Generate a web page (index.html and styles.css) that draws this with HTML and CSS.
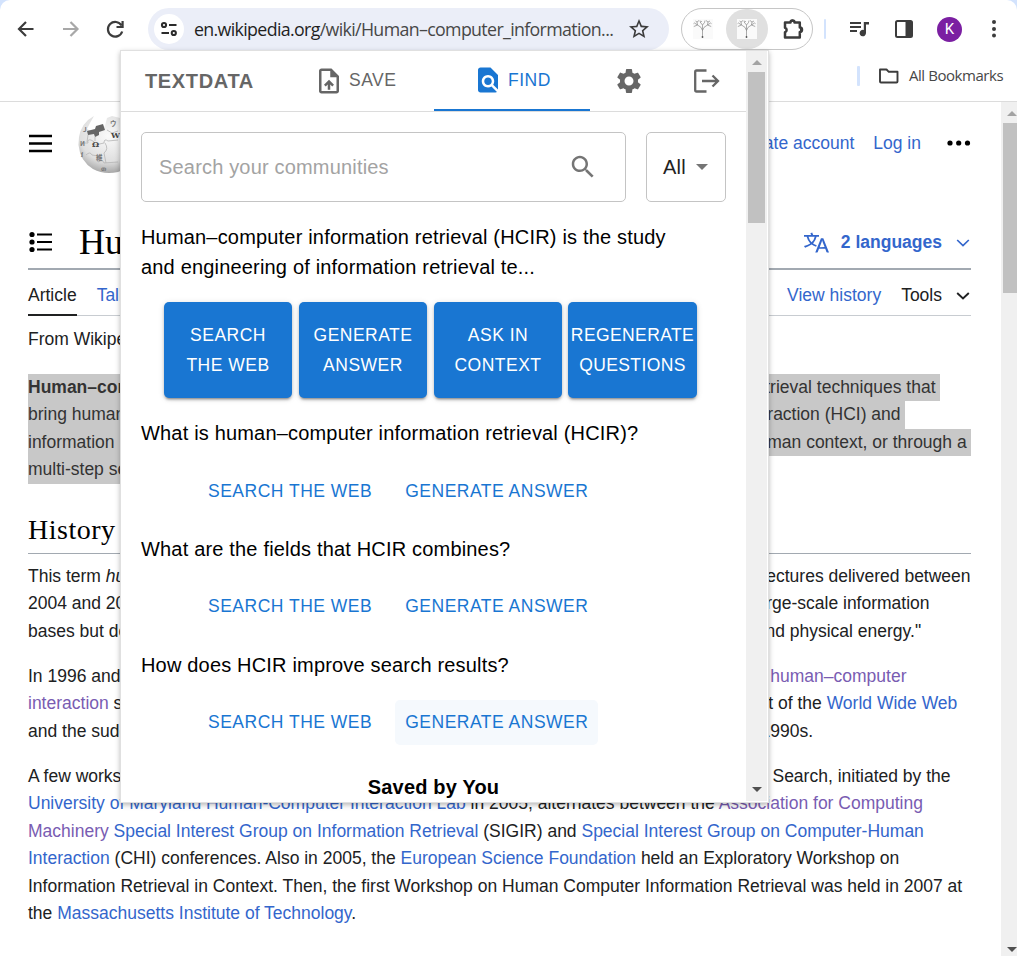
FILE: index.html
```html
<!DOCTYPE html>
<html lang="en">
<head>
<meta charset="utf-8">
<title>Human–computer information retrieval</title>
<link rel="stylesheet" href="styles.css">
</head>
<body>
<div class="window">
  <header class="chrome">
    <div class="toolbar">
      <svg class="nav-icon" viewBox="0 0 44 44"><path d="M29.500 22H15.500M22 15L15 22L22 29" fill="none" stroke="#3c3c3c" stroke-width="2.200"/></svg>
      <svg class="nav-icon" viewBox="0 0 44 44"><path d="M15 22H29M22.500 15L29.500 22L22.500 29" fill="none" stroke="#a8a8a8" stroke-width="2.200"/></svg>
      <svg class="nav-icon reload" viewBox="0 0 44 44"><path d="M28.500 18.500A7.300 7.300 0 1 0 29.200 24.500M29.600 14V20H23.500" fill="none" stroke="#3c3c3c" stroke-width="2.200"/></svg>
      <div class="omnibox">
        <span class="site-info"><svg viewBox="0 0 18 18" width="18" height="18"><g fill="none" stroke="#2b2b2b" stroke-width="2"><circle cx="4" cy="5" r="2.100"/><path d="M9 5H16.500M1.500 13H9"/><circle cx="13.800" cy="13" r="2.100"/></g></svg></span>
        <span class="url"><b>en.wikipedia.org</b>/wiki/Human–computer_information...</span>
        <svg class="star" viewBox="0 0 24 24"><path fill="#3c3c3c" d="M22 9.240l-7.190-.62L12 2 9.190 8.630 2 9.240l5.460 4.730L5.820 21 12 17.270 18.180 21l-1.630-7.030L22 9.240zM12 15.400l-3.760 2.270 1-4.280-3.320-2.880 4.380-.38L12 6.100l1.710 4.040 4.380.38-3.320 2.880 1 4.280L12 15.400z"/></svg>
      </div>
      <div class="extensions">
        <span class="ext"><svg class="tree" viewBox="0 0 20 20"><use href="#tree"/></svg></span>
        <span class="ext ext-active"><svg class="tree" viewBox="0 0 20 20"><use href="#tree"/></svg></span>
        <span class="ext ext-menu"><svg viewBox="0 0 24 24" width="24" height="24"><path d="M4 5.500H9.500A2 2 0 0 1 13.500 5.500H18.800V10.500A2.200 2.200 0 0 1 18.800 14.900V20.500H4V15.200A2.300 2.300 0 0 0 4 10.800Z" fill="none" stroke="#3c3c3c" stroke-width="2.500" stroke-linejoin="round"/><path d="M9 5a2.400 2.400 0 0 1 5 0zM19 10.200a2.500 2.500 0 0 1 0 5z" fill="#3c3c3c"/></svg></span>
      </div>
      <span class="divider"></span>
      <svg class="media" viewBox="0 0 22 20"><path d="M1 4H12M1 8H12M1 12H8" stroke="#3c3c3c" stroke-width="2"/><path d="M14.800 3H20V5.400H17V14A3.200 3.200 0 1 1 14.800 11Z" fill="#3c3c3c"/></svg>
      <svg class="panel-icon" viewBox="0 0 20 20"><rect x="2" y="2" width="16" height="16" rx="1.500" fill="none" stroke="#3c3c3c" stroke-width="2"/><path d="M11.500 2H18V18H11.500Z" fill="#3c3c3c"/></svg>
      <span class="avatar">K</span>
      <svg class="dots-v" viewBox="0 0 6 20"><g fill="#3c3c3c"><circle cx="3" cy="3" r="2"/><circle cx="3" cy="10" r="2"/><circle cx="3" cy="16.500" r="2"/></g></svg>
    </div>
    <div class="bookmarks">
      <span class="divider"></span>
      <svg class="folder" viewBox="0 0 22 18"><path d="M2 14.500V2.500H8.500L10.800 4.800H19.500V14.500Q19.500 15.500 18.500 15.500H3Q2 15.500 2 14.500Z" fill="none" stroke="#3c3c3c" stroke-width="1.900" stroke-linejoin="round"/></svg>
      <span class="bm-label">All Bookmarks</span>
    </div>
  </header>

  <div class="viewport">
    <main class="wiki">
      <div class="wiki-head">
        <svg class="burger" viewBox="0 0 24 20"><path d="M0 2H23M0 9.500H23M0 17H23" stroke="#000" stroke-width="2.400"/></svg>
        <svg class="globe" viewBox="0 0 64 60">
          <defs><radialGradient id="ball" cx="0.480" cy="0.350" r="0.750"><stop offset="0" stop-color="#fafafa"/><stop offset="0.600" stop-color="#dfdfdf"/><stop offset="1" stop-color="#8c8c8c"/></radialGradient></defs>
          <path d="M16 1L12 8L9 14L15 17L22 15L27 11L29 3L34 1L42 3Q62 10 62 30Q60 50 40 57Q26 60 15 54Q2 46 .5 30Q0 14 10 5Z" fill="url(#ball)"/>
          <path d="M9 16L17 14L18 11L25 9L27 15L21 17V20L17 22L16 19L10 20Z" fill="#666"/>
          <path d="M4 28H10Q9 24 13 25T17 30L26 28Q26 23 30 26L40 25M8 40Q12 36 14 40L20 41V47Q25 44 26 48L40 47M27 28Q31 34 26 38L28 48M10 20L9 27M29 15L34 18L40 16M17 22V26" fill="none" stroke="#b5b5b5" stroke-width=".8"/>
          <g class="globe-marks"><text x="14" y="32">Ω</text><text x="33" y="23">W</text><text x="18" y="45" class="mark-s">維</text><text x="2" y="31" class="mark-s">И</text><text x="3" y="42" class="mark-s">វ</text><text x="5" y="17" class="mark-s">J</text><text x="23" y="56" class="mark-s">თ</text><text x="32" y="11" class="mark-s">ウ</text></g>
        </svg>
        <nav class="account"><a>Create account</a><a>Log in</a></nav>
        <svg class="dots-h" viewBox="0 0 24 6"><circle cx="3" cy="3" r="2.600"/><circle cx="11.700" cy="3" r="2.600"/><circle cx="20.500" cy="3" r="2.600"/></svg>
      </div>
      <div class="title-row">
        <svg class="toc" viewBox="0 0 24 22"><g stroke="#000" stroke-width="2.200"><path d="M8 3.500H23M8 11H23M8 18.500H23"/></g><circle cx="3" cy="3.500" r="2.600"/><circle cx="3" cy="11" r="2.600"/><circle cx="3" cy="18.500" r="2.600"/></svg>
        <h1>Human–computer</h1>
        <div class="langs"><svg viewBox="0 0 20 20" width="25" height="25"><path fill="#36c" d="M20 18h-1.440a.6.6 0 01-.4-.12.8.8 0 01-.23-.31L17 15h-5l-1 2.540a.8.8 0 01-.22.3.6.6 0 01-.4.140H9l4.550-11.470h1.890zm-3.530-4.310L14.890 9.500a11.600 11.600 0 01-.39-1.240q-.09.370-.19.690l-.19.560-1.580 4.190zm-6.300-1.580a13.400 13.400 0 01-2.910-1.410 11.460 11.460 0 002.810-5.370H12V4H7.310a4 4 0 00-.2-.56C6.870 2.790 6.600 2 6.600 2l-1.470.5s.4.890.6 1.500H0v1.330h2.150A11.230 11.230 0 005 10.700a17.200 17.200 0 01-5 2.100q.56.820.87 1.380a23.300 23.300 0 005.220-2.510 15.600 15.600 0 003.560 1.770zM3.630 5.330h4.910a8.100 8.100 0 01-2.450 4.450 9.100 9.100 0 01-2.460-4.450"/></svg><b>2 languages</b><svg class="chev" viewBox="0 0 14 8"><path d="M1.200 1L7 6.500L12.800 1" fill="none" stroke="#36c" stroke-width="1.700"/></svg></div>
      </div>
      <div class="tabs-row">
        <a class="tab tab-on">Article</a><a class="tab">Talk</a>
        <a class="tab push">View history</a><a class="tab tools">Tools <svg class="chev" viewBox="0 0 14 8"><path d="M1.200 1L7 6.500L12.800 1" fill="none" stroke="#202122" stroke-width="1.900"/></svg></a>
      </div>
      <p class="sub">From Wikipedia, the free encyclopedia</p>
      <p class="lead"><span class="sel"><b>Human–computer information retrieval</b> (<b>HCIR</b>) is the study and engineering of information retrieval techniques that </span><span class="sel">bring human intelligence into the <a>search</a> process. It combines the fields of human-computer interaction (HCI) and </span><span class="sel">information retrieval (IR) and creates systems that improve search by taking into account the human context, or through a </span><span class="sel">multi-step search process that provides the opportunity for human feedback.</span></p>
      <h2>History</h2>
      <p>
        <span class="ln">This term <i>human–computer information retrieval</i> was coined by <a>Gary Marchionini</a> in a series of lectures delivered between</span>
        <span class="ln">2004 and 2006.<sup>[1]</sup> Marchionini's main thesis is that "HCIR aims to empower people to explore large-scale information</span>
        <span class="ln">bases but demands that people also take responsibility for this control by expending cognitive and physical energy."</span>
      </p>
      <p>
        <span class="ln">In 1996 and 1998, a pair of workshops at the <a>University of Glasgow</a> on <a>information retrieval</a> and <a class="seen">human–computer</a></span>
        <span class="ln"><a class="seen">interaction</a> sought to address the overlap between these two fields. Marchionini notes the impact of the <a>World Wide Web</a></span>
        <span class="ln">and the sudden increase in information literacy – changes that were only embryonic in the late 1990s.</span>
      </p>
      <p>
        <span class="ln">A few workshops have focused on the intersection of IR and HCI. The Workshop on Exploratory Search, initiated by the</span>
        <span class="ln"><a>University of Maryland Human-Computer Interaction Lab</a> in 2005, alternates between the <a class="seen">Association for Computing</a></span>
        <span class="ln"><a class="seen">Machinery</a> <a>Special Interest Group on Information Retrieval</a> (SIGIR) and <a>Special Interest Group on Computer-Human</a></span>
        <span class="ln"><a>Interaction</a> (CHI) conferences. Also in 2005, the <a>European Science Foundation</a> held an Exploratory Workshop on</span>
        <span class="ln">Information Retrieval in Context. Then, the first Workshop on Human Computer Information Retrieval was held in 2007 at</span>
        <span class="ln">the <a>Massachusetts Institute of Technology</a>.</span>
      </p>
    </main>
    <div class="scrollbar page-scroll"><i class="arrow up"></i><i class="thumb"></i><i class="arrow down"></i></div>
  </div>

  <section class="popup">
    <div class="pop-main">
      <nav class="pop-tabs">
        <strong class="brand">TEXTDATA</strong>
        <span class="pop-tab save"><svg viewBox="0 0 24 24" width="30" height="30"><path fill="#666" d="M14 2H6c-1.100 0-1.990.9-1.990 2L4 20c0 1.100.89 2 1.990 2H18c1.100 0 2-.9 2-2V8l-6-6zm4 18H6V4h7v5h5v11zM8 15.010l1.410 1.410L11 14.840V19h2v-4.160l1.590 1.590L16 15.010 12.010 11 8 15.010z"/></svg>SAVE</span>
        <span class="pop-tab find"><svg viewBox="0 0 24 24" width="30" height="30"><path fill="#1976d2" d="M20 19.590V8l-6-6H6c-1.100 0-1.990.9-1.990 2L4 20c0 1.100.89 2 1.990 2H18c.45 0 .85-.15 1.190-.4l-4.430-4.430c-.8.520-1.740.830-2.760.830-2.760 0-5-2.240-5-5s2.240-5 5-5 5 2.240 5 5c0 1.020-.31 1.960-.83 2.750L20 19.590zM9 13c0 1.660 1.340 3 3 3s3-1.340 3-3-1.340-3-3-3-3 1.340-3 3z"/></svg>FIND</span>
        <svg class="gear" viewBox="0 0 24 24"><path fill="#666" d="M19.140 12.940c.04-.3.060-.61.060-.94 0-.32-.02-.64-.07-.94l2.030-1.580c.18-.14.230-.41.120-.61l-1.920-3.320c-.12-.22-.37-.29-.59-.22l-2.390.96c-.5-.38-1.030-.7-1.620-.94l-.36-2.540c-.04-.24-.24-.41-.48-.41h-3.840c-.24 0-.43.170-.47.410l-.36 2.540c-.59.240-1.130.570-1.620.940l-2.390-.96c-.22-.08-.47 0-.59.220L2.740 8.870c-.12.210-.08.470.120.610l2.030 1.580c-.05.300-.09.630-.09.940s.02.640.070.940l-2.030 1.580c-.18.140-.23.410-.12.610l1.920 3.320c.12.220.37.290.59.220l2.390-.96c.5.380 1.030.700 1.620.940l.36 2.540c.05.240.24.410.48.410h3.840c.24 0 .44-.17.470-.41l.36-2.540c.59-.24 1.130-.56 1.620-.94l2.390.96c.22.080.47 0 .59-.22l1.920-3.320c.12-.22.070-.47-.12-.61l-2.010-1.580zM12 15.600c-1.980 0-3.600-1.620-3.600-3.600s1.620-3.600 3.600-3.600 3.600 1.620 3.600 3.600-1.620 3.600-3.600 3.600z"/></svg>
        <svg class="logout" viewBox="0 0 28 26"><path d="M13.500 2.500H3.500Q2.200 2.500 2.200 4V22Q2.200 23.500 3.500 23.500H13.500M9 13H25M19.500 7.500L25 13L19.500 18.500" fill="none" stroke="#666" stroke-width="2.300"/></svg>
      </nav>
      <div class="pop-body">
        <div class="search-row">
          <div class="field"><span>Search your communities</span><svg viewBox="0 0 24 24" width="30" height="30"><path fill="#757575" d="M15.500 14h-.79l-.28-.27C15.410 12.590 16 11.110 16 9.500 16 5.910 13.090 3 9.500 3S3 5.910 3 9.500 5.910 16 9.500 16c1.610 0 3.090-.59 4.230-1.570l.27.280v.790l5 4.990L20.490 19l-4.990-5zm-6 0C7.010 14 5 11.990 5 9.500S7.010 5 9.500 5 14 7.010 14 9.500 11.990 14 9.500 14z"/></svg></div>
          <div class="select">All<i class="caret"></i></div>
        </div>
        <p class="excerpt">Human–computer information retrieval (HCIR) is the study<br>and engineering of information retrieval te...</p>
        <div class="actions">
          <button>SEARCH<br>THE WEB</button><button>GENERATE<br>ANSWER</button><button>ASK IN<br>CONTEXT</button><button class="wide">REGENERATE<br>QUESTIONS</button>
        </div>
        <p class="question">What is human–computer information retrieval (HCIR)?</p>
        <div class="links"><span>SEARCH THE WEB</span><span>GENERATE ANSWER</span></div>
        <p class="question">What are the fields that HCIR combines?</p>
        <div class="links"><span>SEARCH THE WEB</span><span>GENERATE ANSWER</span></div>
        <p class="question">How does HCIR improve search results?</p>
        <div class="links"><span>SEARCH THE WEB</span><span class="hover">GENERATE ANSWER</span></div>
        <p class="saved">Saved by You</p>
      </div>
    </div>
    <div class="scrollbar pop-scroll"><i class="arrow up"></i><i class="thumb"></i><i class="arrow down"></i></div>
  </section>
</div>
<svg class="defs" width="0" height="0"><symbol id="tree" viewBox="0 0 20 20"><rect width="20" height="20" fill="#fafafa"/><path d="M9.500 18V10M9.500 11.500Q9 8 4.500 6M9.500 11.500Q10 8 14.500 6M9.500 10V6L7.500 3.500M9.500 6L11.500 3.500M4.500 6L.8 7.500M4.500 6L4 3M4.500 6L1.500 4M14.500 6L18.200 7.500M14.500 6L15 3M14.500 6L17.500 4M4 3L2.500 2M4 3L6 1.500M15 3L13 1.500M15 3L17 2M7.500 3.500L7 1.500M11.500 3.500L12 1.500M1.500 4L.6 4.600M17.500 4L18.500 4.600M7.500 3.500L8.800 2" fill="none" stroke="#888" stroke-width=".7"/><circle cx="9.500" cy="18" r=".9" fill="#555"/></symbol></svg>
</body>
</html>
```

FILE: styles.css
```css
* { box-sizing: border-box; }
body { margin: 0; background: #fff; font-family: "Liberation Sans", Arial, sans-serif; }
p, h1, h2 { margin: 0; }
svg { flex: none; display: block; }
.defs { position: absolute; }
.window { position: relative; width: 1017px; height: 956px; overflow: hidden; display: flex; flex-direction: column; }

/* browser chrome */
.chrome { height: 102px; flex: none; border-bottom: 1px solid #dcdcdc; border-radius: 10px 10px 0 0; background: #fff; box-shadow: 0 -10px 0 10px #d3e3fd; }
.toolbar { height: 50px; padding: 8px 0 0 4px; display: flex; align-items: center; }
.nav-icon { width: 44px; height: 44px; }
.reload { margin-left: 1px; }
.omnibox { width: 521px; height: 42px; margin-left: 11px; padding: 0 18px 0 6px; border-radius: 21px; background: #ebeef8; display: flex; align-items: center; flex: none; }
.site-info { width: 30px; height: 30px; flex: none; border-radius: 50%; background: #fff; display: flex; align-items: center; justify-content: center; }
.url { flex: 1; min-width: 0; margin-left: 10px; white-space: nowrap; font: 17.8px "Open Sans", "Noto Sans", sans-serif; letter-spacing: -.65px; color: #474747; }
.url b { font-weight: 400; color: #1f1f1f; }
.star { width: 24px; height: 24px; }
.extensions { width: 132px; height: 42px; margin-left: 12px; border: 1px solid #c6c6c6; border-radius: 21px; display: flex; flex: none; overflow: hidden; }
.ext { width: 42px; height: 40px; display: flex; align-items: center; justify-content: center; }
.ext-active { width: 42px; margin: 0 2px 0 2px; border-radius: 21px; background: #e0e0e0; }
.ext-menu { padding-left: 4px; }
.tree { width: 20px; height: 20px; }
.divider { width: 2px; height: 20px; background: #d3e3fd; border-radius: 1px; }
.toolbar .divider { margin-left: 11px; flex: none; }
.media { width: 22px; height: 20px; margin-left: 23px; }
.panel-icon { width: 20px; height: 20px; margin-left: 23px; }
.avatar { width: 25px; height: 25px; margin-left: 23px; flex: none; border-radius: 50%; background: #7b1fa2; color: #fff; font: 15px/25px Roboto, sans-serif; text-align: center; }
.dots-v { width: 6px; height: 20px; margin-left: 29px; }
.bookmarks { height: 51px; padding-right: 13px; display: flex; align-items: center; justify-content: flex-end; }
.bookmarks .divider { width: 3px; }
.folder { width: 22px; height: 18px; margin: 0 9px 0 18px; }
.bm-label { width: 95px; padding-bottom: 1px; white-space: nowrap; font: 15px "Open Sans", "Noto Sans", sans-serif; letter-spacing: -.45px; color: #474747; }

/* article */
.viewport { flex: 1; min-height: 0; display: flex; justify-content: space-between; }
.wiki { width: 971px; padding-left: 28px; font-size: 17.5px; line-height: 27.5px; color: #202122; white-space: nowrap; overflow: hidden; }
.wiki a { color: #36c; }
.wiki a.seen { color: #795cb2; }
.wiki-head { height: 84px; display: flex; align-items: center; }
.burger { width: 24px; height: 20px; margin-left: 1px; }
.globe { width: 64px; height: 60px; margin: 1px 0 0 25px; }
.globe-marks { font: bold 8px "DejaVu Serif", serif; fill: #444; }
.mark-s { font-size: 6.5px; font-family: "Noto Sans CJK JP", "DejaVu Sans", sans-serif; fill: #777; }
.account { margin-left: auto; display: flex; gap: 19px; }
.dots-h { width: 24px; height: 6px; margin: -2px 0 0 26px; }
.title-row { height: 84px; border-bottom: 2px solid #a2a9b1; padding-top: 30px; display: flex; align-items: center; }
.toc { width: 24px; height: 22px; margin-left: 1px; }
h1 { margin-left: 26px; font: 36px/44px "Liberation Serif", Georgia, serif; color: #000; }
.langs { margin-left: auto; padding-top: 1px; display: flex; align-items: center; color: #36c; }
.langs b { margin: 0 14px 0 12px; }
.chev { width: 14px; height: 8px; margin-right: 1px; }
.tabs-row { height: 46px; display: flex; border-bottom: 1px solid #c8ccd1; }
.tab { height: 46px; line-height: 51px; margin-right: 20px; }
.wiki .tab-on { color: #202122; border-bottom: 2px solid #202122; }
.push { margin-left: auto; }
.wiki .tools { height: 51px; color: #202122; margin-right: 0; display: flex; align-items: center; gap: 14px; }
.sub { margin-top: 10px; margin-bottom: 20px; }
.lead { color: #333; line-height: 27.5px; }
.sel { display: block; width: fit-content; height: 27.500px; white-space: pre; background: #c8c8c8; }
.lead a { color: #333; }
h2 { height: 43px; margin: 27px 0 9px; border-bottom: 1px solid #a2a9b1; font: 28px/37px "Liberation Serif", Georgia, serif; letter-spacing: .5px; color: #000; }
.wiki h2 + p ~ p { margin-top: 17.500px; }
.ln { display: block; height: 27.500px; }
sup { font-size: 14px; line-height: 1; }

/* scrollbars */
.scrollbar { background: #f0f0f0; display: flex; flex-direction: column; align-items: center; flex: none; }
.arrow { border: 5px solid transparent; width: 0; height: 0; }
.up { border-top: 0; border-bottom-color: #a3a3a3; }
.down { border-bottom: 0; border-top-color: #505050; margin-top: auto; }
.page-scroll { width: 16px; padding: 9px 0 4px 2px; }
.page-scroll .thumb { width: 14px; height: 170px; margin: 7px 0 0 0; background: #c1c1c1; flex: none; }
.page-scroll .arrow { margin-left: 3px; }
.pop-scroll { width: 21px; margin: 0 1px 1px 0; padding: 9px 0; }
.pop-scroll .thumb { width: 17px; height: 151px; margin-top: 7px; background: #c1c1c1; flex: none; }

/* extension popup, floating over the page */
.popup { position: absolute; left: 120px; top: 50px; width: 649px; height: 753px; display: flex; background: #fff; border: 1px solid #e0e0e0; box-shadow: 0 2px 5px rgba(0,0,0,.28); }
.pop-main { flex: 1; min-width: 0; overflow: hidden; }
.pop-tabs { height: 61px; border-bottom: 1px solid #dcdcdc; display: flex; align-items: center; padding-left: 24px; font-size: 17.500px; letter-spacing: .5px; color: #666; }
.brand { width: 169px; font-size: 20px; letter-spacing: .65px; }
.pop-tab { height: 60px; display: flex; align-items: center; gap: 5px; padding-bottom: 1px; }
.save { width: 120px; }
.find { width: 156px; padding-left: 39px; color: #1976d2; border-bottom: 2px solid #1976d2; padding-bottom: 0; }
.gear { width: 30px; height: 30px; margin-left: 24px; }
.logout { width: 28px; height: 26px; margin-left: 49px; }
.pop-body { padding: 20px 20px 0; font-size: 20px; line-height: 30px; letter-spacing: .18px; color: #000; white-space: nowrap; }
.search-row { display: flex; gap: 20px; }
.field, .select { height: 70px; border: 1px solid #c4c4c4; border-radius: 5px; display: flex; align-items: center; justify-content: space-between; }
.field { width: 485px; padding: 0 27px 0 17px; color: #a3a3a3; flex: none; }
.select { width: 80px; padding: 0 17px 0 16px; color: #222; flex: none; }
.caret { border: 6px solid transparent; border-top-color: #757575; border-bottom: 0; }
.excerpt { margin-top: 20px; }
.actions { margin: 20px 0 20px 23px; display: flex; gap: 7px; }
.actions button { width: 128px; height: 96px; padding: 0; border: 0; border-radius: 5px; background: #1976d2; color: #fff; font: 17.500px/30px "Liberation Sans", Arial, sans-serif; letter-spacing: .5px; box-shadow: 0 3px 2px -2px rgba(0,0,0,.25), 0 2px 3px rgba(0,0,0,.2), 0 1px 6px rgba(0,0,0,.12); white-space: nowrap; }
.actions .wide { width: 129px; margin-left: -1px; letter-spacing: .4px; }
.links { margin: 20.600px 0 20.200px 57px; display: flex; gap: 13px; font-size: 17.500px; letter-spacing: .5px; color: #1976d2; }
.links span { height: 45px; line-height: 45px; padding: 0 10px; border-radius: 5px; }
.links .hover { background: #f5f9fd; }
.saved { margin-top: 26.500px; text-align: center; font-weight: 700; }
```
